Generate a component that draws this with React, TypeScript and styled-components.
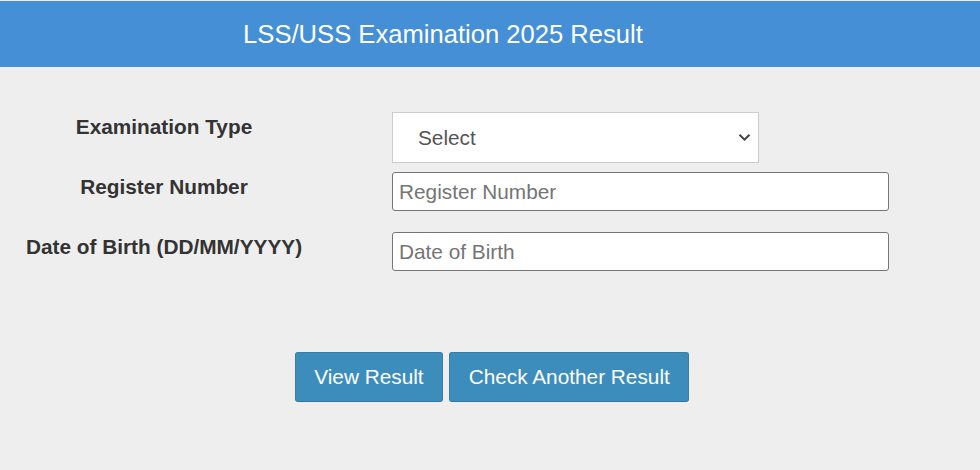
import React from "react";
import styled, { createGlobalStyle } from "styled-components";

const Global = createGlobalStyle`
  html, body { margin: 0; padding: 0; background: #eeeeee; }
  body { font-family: "Liberation Sans", Arial, sans-serif; color: #333; }
  * { box-sizing: border-box; }
`;

const Page = styled.div`
  padding-top: 1px;
  min-height: 470px;
  background: #eeeeee;
`;

const Header = styled.header`
  height: 66px;
  background: #448fd5;
  display: flex;
  align-items: center;
  justify-content: center;
  padding-right: 94px;
`;

const Title = styled.h1`
  margin: 0;
  font-size: 25.6px;
  font-weight: 400;
  color: #ffffff;
  line-height: 30px;
  padding-bottom: 1px;
`;

const Form = styled.form`
  padding-top: 45px;
  display: flex;
  flex-direction: column;
`;

const Row = styled.div`
  display: grid;
  grid-template-columns: 328px 1fr;
  column-gap: 64px;
  height: 60px;
  padding-right: 91px;
`;

const Label = styled.label`
  text-align: center;
  font-size: 20.8px;
  font-weight: 700;
  color: #333;
  line-height: 24px;
  padding-top: 3px;
`;

const SelectWrap = styled.div`
  position: relative;
  width: 367px;
  height: 51px;
`;

const Select = styled.select`
  appearance: none;
  -webkit-appearance: none;
  width: 100%;
  height: 100%;
  background: #ffffff;
  border: 1px solid #cccccc;
  border-radius: 0;
  padding: 0 40px 0 25px;
  font-family: "Liberation Sans", Arial, sans-serif;
  font-size: 20.8px;
  color: #555;
  outline: none;
`;

const Chevron = styled.svg`
  position: absolute;
  right: 8px;
  top: 21px;
  width: 13px;
  height: 9px;
  pointer-events: none;
`;

const Input = styled.input`
  width: 100%;
  height: 39px;
  background: #ffffff;
  border: 1px solid #767676;
  border-radius: 3px;
  padding: 0 6px;
  font-family: "Liberation Sans", Arial, sans-serif;
  font-size: 20.8px;
  color: #333;
  outline: none;
  &::placeholder { color: #757575; }
`;

const Buttons = styled.div`
  display: flex;
  justify-content: center;
  gap: 6px;
  margin-top: 60px;
  padding-left: 4px;
`;

const Button = styled.button`
  height: 50px;
  padding: 0 18.5px;
  background: #3c8dbc;
  border: 1px solid #367fa9;
  border-bottom-color: #31769e;
  border-radius: 3px;
  color: #ffffff;
  font-family: "Liberation Sans", Arial, sans-serif;
  font-size: 20.8px;
  line-height: 24px;
  cursor: pointer;
`;

export default function App() {
  return (
    <Page>
      <Global />
      <Header>
        <Title>LSS/USS Examination 2025 Result</Title>
      </Header>
      <Form onSubmit={(e) => e.preventDefault()}>
        <Row>
          <Label>Examination Type</Label>
          <SelectWrap>
            <Select defaultValue="">
              <option value="">Select</option>
              <option value="LSS">LSS</option>
              <option value="USS">USS</option>
            </Select>
            <Chevron viewBox="0 0 13 9">
              <path d="M1.5 1.8 L6.5 6.6 L11.5 1.8" fill="none" stroke="#444" strokeWidth="2" />
            </Chevron>
          </SelectWrap>
        </Row>
        <Row>
          <Label>Register Number</Label>
          <Input placeholder="Register Number" />
        </Row>
        <Row>
          <Label>Date of Birth (DD/MM/YYYY)</Label>
          <Input placeholder="Date of Birth" />
        </Row>
        <Buttons>
          <Button type="submit">View Result</Button>
          <Button type="button">Check Another Result</Button>
        </Buttons>
      </Form>
    </Page>
  );
}
